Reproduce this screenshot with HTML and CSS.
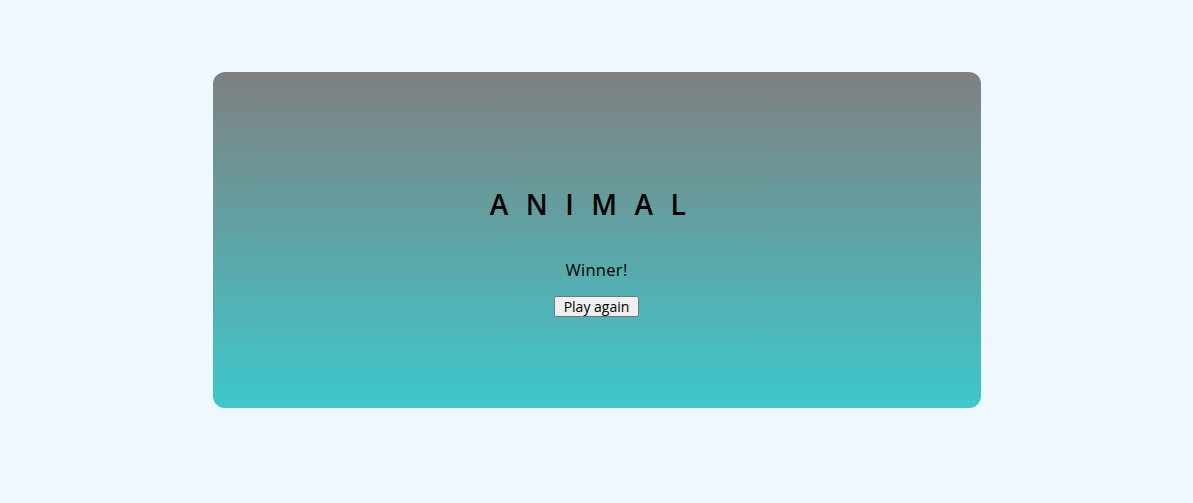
FILE: index.html
```html
<!DOCTYPE html>
<html>
<head>
<meta charset="utf-8">
<link rel="stylesheet" href="styles.css">
</head>
<body>
<div class="page">
  <div class="card">
    <h1 class="title">ANIMAL</h1>
    <p class="status">Winner!</p>
    <button class="again">Play again</button>
  </div>
</div>
</body>
</html>
```
FILE: styles.css
```css
html, body {
  margin: 0;
  background: #f0f8ff;
}
.page {
  display: flex;
  justify-content: center;
  padding-top: 72px;
  font-family: "Open Sans", "Lato", sans-serif;
}
.card {
  width: 768px;
  height: 336px;
  box-sizing: border-box;
  border-radius: 12px;
  background: linear-gradient(to bottom, #808080, #3dc8cc);
  display: flex;
  flex-direction: column;
  align-items: center;
  padding-top: 118px;
  color: #000;
}
.title {
  margin: 0;
  font-size: 28px;
  font-weight: 600;
  letter-spacing: 17.5px;
  line-height: 28px;
}
.status {
  margin: 42px 0 0;
  font-size: 16.5px;
  line-height: 20px;
  font-weight: 500;
  letter-spacing: 0.3px;
}
.again {
  margin-top: 16px;
  font-family: "Open Sans", "Lato", sans-serif;
  font-size: 14px;
  line-height: 15px;
  font-weight: 500;
  padding: 1px 8px;
}
```
